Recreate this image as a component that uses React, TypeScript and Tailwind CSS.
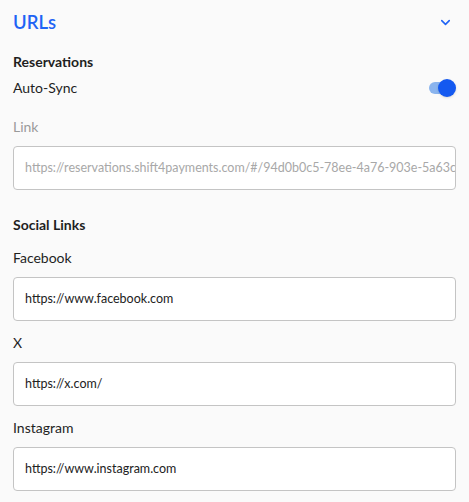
import { ChevronDown } from "lucide-react"

function Field({ label, value, muted }: { label: string; value: string; muted?: boolean }) {
  return (
    <div>
      <div className={`text-[14px] leading-[20px] ${muted ? "text-[#9a9a9a]" : "text-[#1f1f1f]"}`}>{label}</div>
      <div className="mt-[9px] h-[44px] rounded-[4px] border border-[#c4c4c4] bg-white px-[11px] flex items-center overflow-hidden">
        <span className={`whitespace-nowrap text-[12.5px] ${muted ? "text-[#a8a8a8]" : "text-[#222]"}`}>{value}</span>
      </div>
    </div>
  )
}

export default function App() {
  return (
    <div className="min-h-[502px] w-[469px] bg-[#fafafa] px-[13px] pt-[10px] font-['Lato','Noto_Sans',sans-serif]">
      <div className="flex h-[24px] items-center justify-between pr-[3px]">
        <h2 className="text-[18.5px] leading-[24px] font-semibold text-[#1f63f5]">URLs</h2>
        <ChevronDown className="h-[15px] w-[15px] text-[#1f63f5]" strokeWidth={2.5} />
      </div>

      <div className="mt-[18px] text-[14px] leading-[20px] font-bold text-[#1f1f1f]">Reservations</div>
      <div className="mt-[6px] flex items-center justify-between">
        <span className="text-[14px] leading-[20px] text-[#1f1f1f]">Auto-Sync</span>
        <div className="relative mr-[1px] h-[12px] w-[26px] rounded-full bg-[#8ab4ee]">
          <div className="absolute -right-[1px] -top-[3px] h-[18px] w-[18px] rounded-full bg-[#1459f0] shadow-sm" />
        </div>
      </div>

      <div className="mt-[19px]">
        <Field
          label="Link"
          muted
          value="https://reservations.shift4payments.com/#/94d0b0c5-78ee-4a76-903e-5a63c1d2e4f7"
        />
      </div>

      <div className="mt-[25px] text-[14px] leading-[20px] font-bold text-[#1f1f1f]">Social Links</div>

      <div className="mt-[13px] flex flex-col gap-[12px]">
        <Field label="Facebook" value="https://www.facebook.com" />
        <Field label="X" value="https://x.com/" />
        <Field label="Instagram" value="https://www.instagram.com" />
      </div>
    </div>
  )
}
